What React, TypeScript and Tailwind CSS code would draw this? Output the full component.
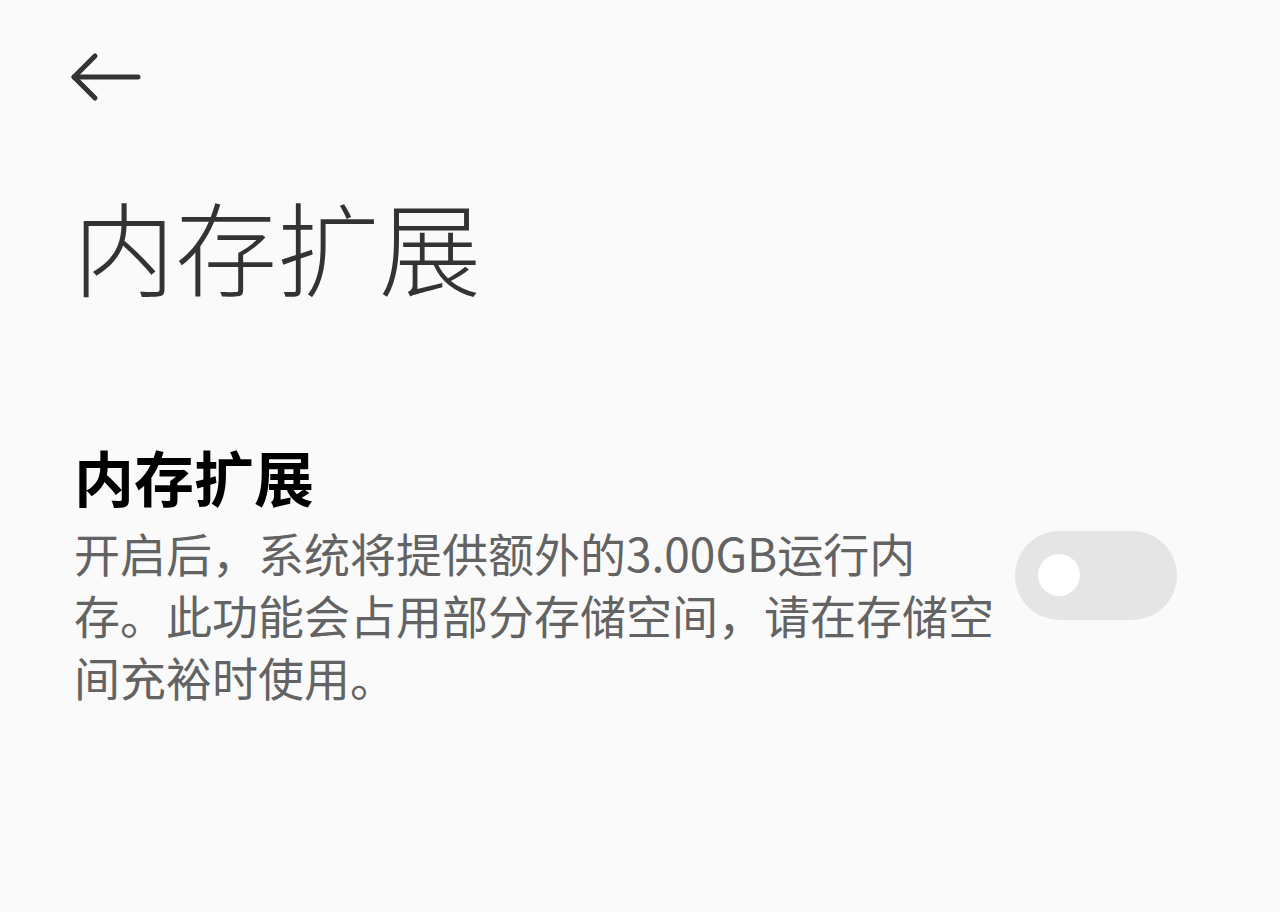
export default function App() {
  return (
    <div className="min-h-[912px] w-full bg-[#fafafa] font-['Noto_Sans_CJK_SC',sans-serif]">
      <div className="pl-[70px] pt-[52px]">
        <svg width="72" height="50" viewBox="0 0 72 50" fill="none" stroke="#333333" strokeWidth="5" strokeLinecap="round" strokeLinejoin="round">
          <path d="M4 25H68" />
          <path d="M25 4L4 25L25 46" />
        </svg>
      </div>

      <h1 className="mt-[92px] pl-[73px] text-[102px] font-light leading-none text-[#333333]">
        内存扩展
      </h1>

      <div className="mt-[147px] flex items-center justify-between pl-[74px] pr-[103px]">
        <div className="w-[925px]">
          <p className="text-[60px] font-bold leading-[66px] text-black">内存扩展</p>
          <p className="mt-[12px] text-[46px] leading-[62px] text-[#636363]">
            开启后，系统将提供额外的3.00GB运行内存。此功能会占用部分存储空间，请在存储空间充裕时使用。
          </p>
        </div>
        <div className="flex h-[89px] w-[162px] items-center rounded-full bg-[#e5e5e5] pl-[23px]">
          <div className="h-[42px] w-[42px] rounded-full bg-white" />
        </div>
      </div>
    </div>
  );
}
